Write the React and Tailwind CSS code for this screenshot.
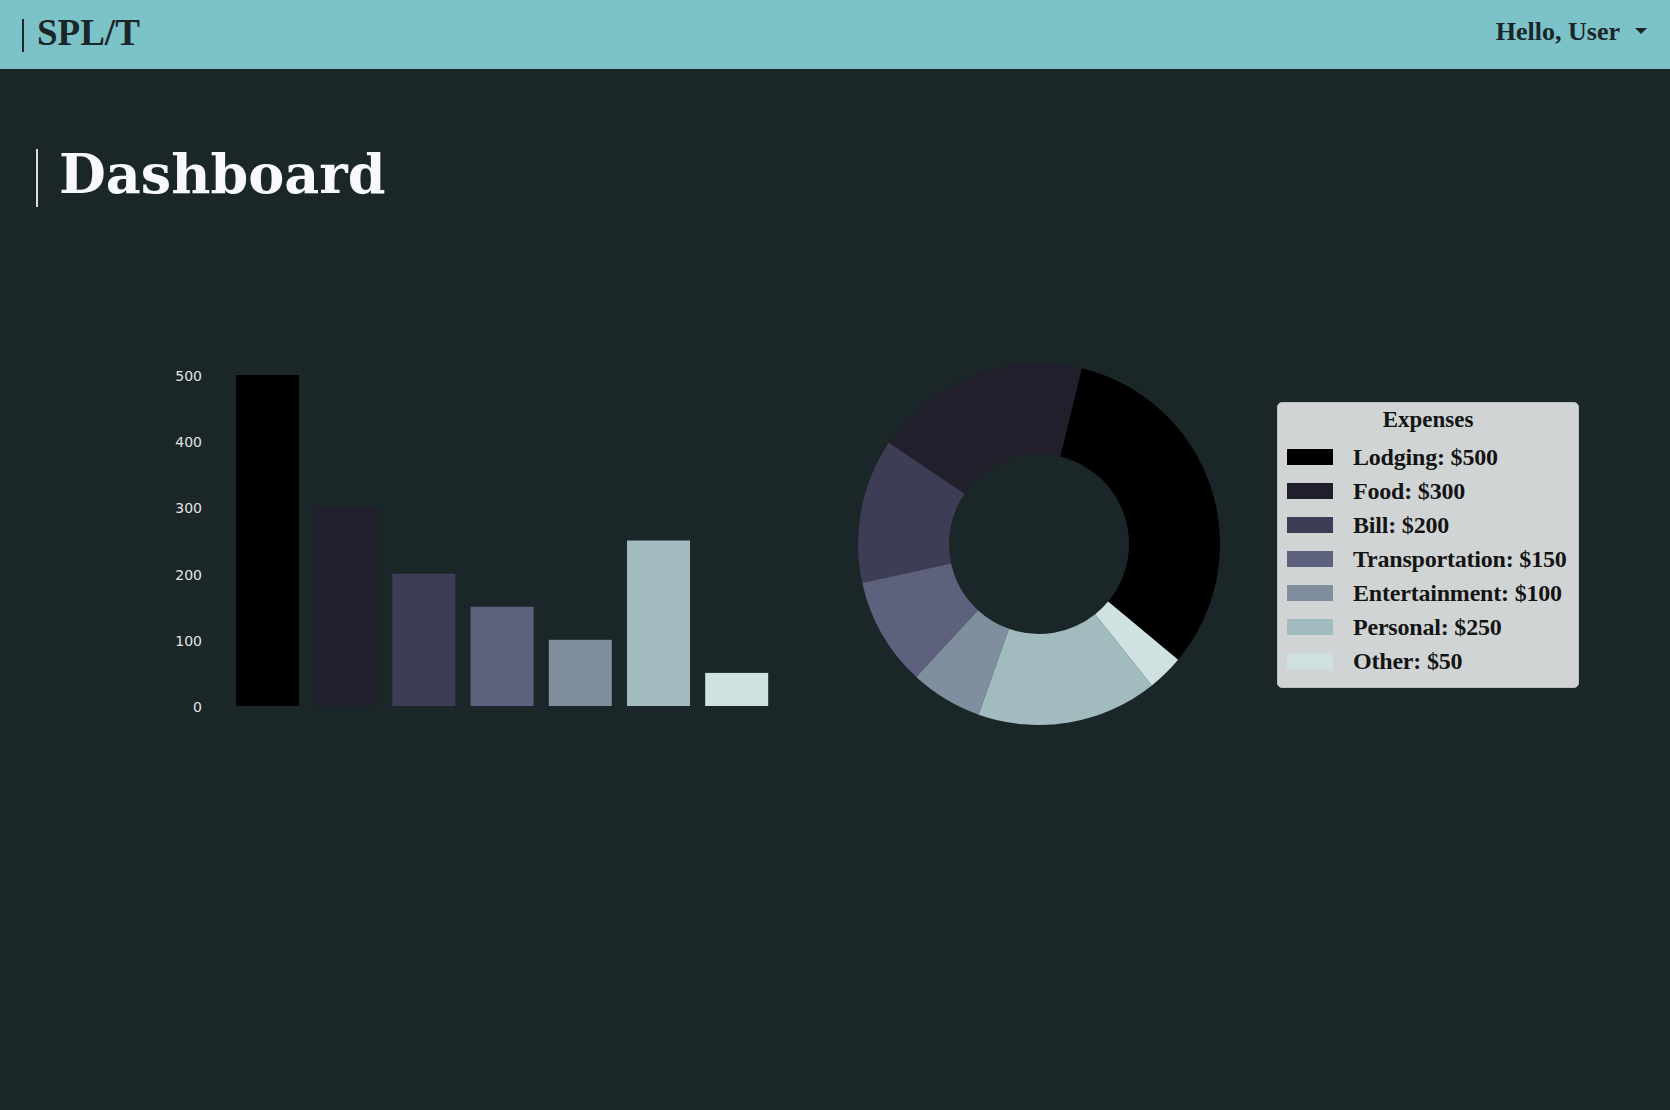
import React from "react"

const expenses = [
  { name: "Lodging", value: 500, color: "#000000" },
  { name: "Food", value: 300, color: "#211f2c" },
  { name: "Bill", value: 200, color: "#3e3d56" },
  { name: "Transportation", value: 150, color: "#5e617d" },
  { name: "Entertainment", value: 100, color: "#7f8f9d" },
  { name: "Personal", value: 250, color: "#a1bbbe" },
  { name: "Other", value: 50, color: "#cfe1e0" },
]

const serif = { fontFamily: '"Liberation Serif", "Times New Roman", serif' }

function BarChart() {
  // baseline at y=356, 0.662px per dollar
  const ticks = [0, 100, 200, 300, 400, 500]
  return (
    <svg width="640" height="380" className="shrink-0">
      {ticks.map((t) => (
        <text
          key={t}
          x="52"
          y={356 - t * 0.662 + 6}
          textAnchor="end"
          fontSize="14"
          fill="#e2e4e4"
          fontFamily='"DejaVu Sans", sans-serif'
        >
          {t}
        </text>
      ))}
      {expenses.map((e, i) => {
        const h = e.value * 0.662
        return (
          <rect key={e.name} x={86 + i * 78.2} y={356 - h} width="63" height={h} fill={e.color} />
        )
      })}
    </svg>
  )
}

function Donut() {
  const cx = 199
  const cy = 194
  const R = 181
  const r = 90
  const total = expenses.reduce((s, e) => s + e.value, 0)
  const pt = (a, rad) => {
    const t = (a * Math.PI) / 180
    return `${(cx + rad * Math.sin(t)).toFixed(2)} ${(cy - rad * Math.cos(t)).toFixed(2)}`
  }
  let end = 129.8
  const slices = expenses.map((e) => {
    const sweep = (e.value / total) * 360
    const start = end - sweep
    const large = sweep > 180 ? 1 : 0
    const d = `M ${pt(start, R)} A ${R} ${R} 0 ${large} 1 ${pt(end, R)} L ${pt(end, r)} A ${r} ${r} 0 ${large} 0 ${pt(start, r)} Z`
    end = start
    return <path key={e.name} d={d} fill={e.color} />
  })
  return (
    <svg width="400" height="390" className="shrink-0">
      {slices}
    </svg>
  )
}

function Legend() {
  return (
    <div
      className="mt-[52px] ml-[37px] w-[302px] rounded-[5px] border border-[#b9bfc0] bg-[#d1d4d5] pt-[1px] pb-[9px] text-[#141414]"
      style={serif}
    >
      <div className="h-[33px] mb-[3px] flex items-center justify-center text-[23px] font-bold">Expenses</div>
      {expenses.map((e) => (
        <div key={e.name} className="h-[34px] flex items-center">
          <span className="ml-[9px] w-[46px] h-[16px] shrink-0" style={{ backgroundColor: e.color }} />
          <span className="ml-[20px] text-[24px] font-bold whitespace-nowrap tracking-[-0.2px]">
            {e.name}: ${e.value}
          </span>
        </div>
      ))}
    </div>
  )
}

export default function App() {
  return (
    <div className="min-h-[1110px] w-full bg-[#1a2628]">
      <header className="h-[69px] bg-[#7bc3c9] flex items-center justify-between px-[22px] text-[#1a2628]" style={serif}>
        <div className="flex items-center">
          <span className="w-[2px] h-[33px] bg-[#1a2628] mt-[1px]" />
          <span className="ml-[13px] mb-[4px] text-[37px] font-bold leading-none">SPL/T</span>
        </div>
        <div className="flex items-center mr-[1px] mb-[5px]">
          <span className="text-[26px] font-bold leading-none">Hello, User</span>
          <span className="ml-[15px] mt-[-2px] w-0 h-0 border-x-[6.5px] border-x-transparent border-t-[6px] border-t-[#1a2628]" />
        </div>
      </header>

      <main>
        <div className="pt-[80px] pl-[36px] flex items-center">
          <span className="w-[2px] h-[58px] bg-[#dcdfe0]" />
          <h1
            className="ml-[21px] text-[54px] font-bold leading-none text-[#f8f9fa] mt-[-8px]"
            style={{ fontFamily: '"DejaVu Serif", serif' }}
          >
            Dashboard
          </h1>
        </div>

        <div className="mt-[143px] pl-[150px] flex items-start">
          <BarChart />
          <div className="ml-[50px] flex items-start">
            <Donut />
            <Legend />
          </div>
        </div>
      </main>
    </div>
  )
}
